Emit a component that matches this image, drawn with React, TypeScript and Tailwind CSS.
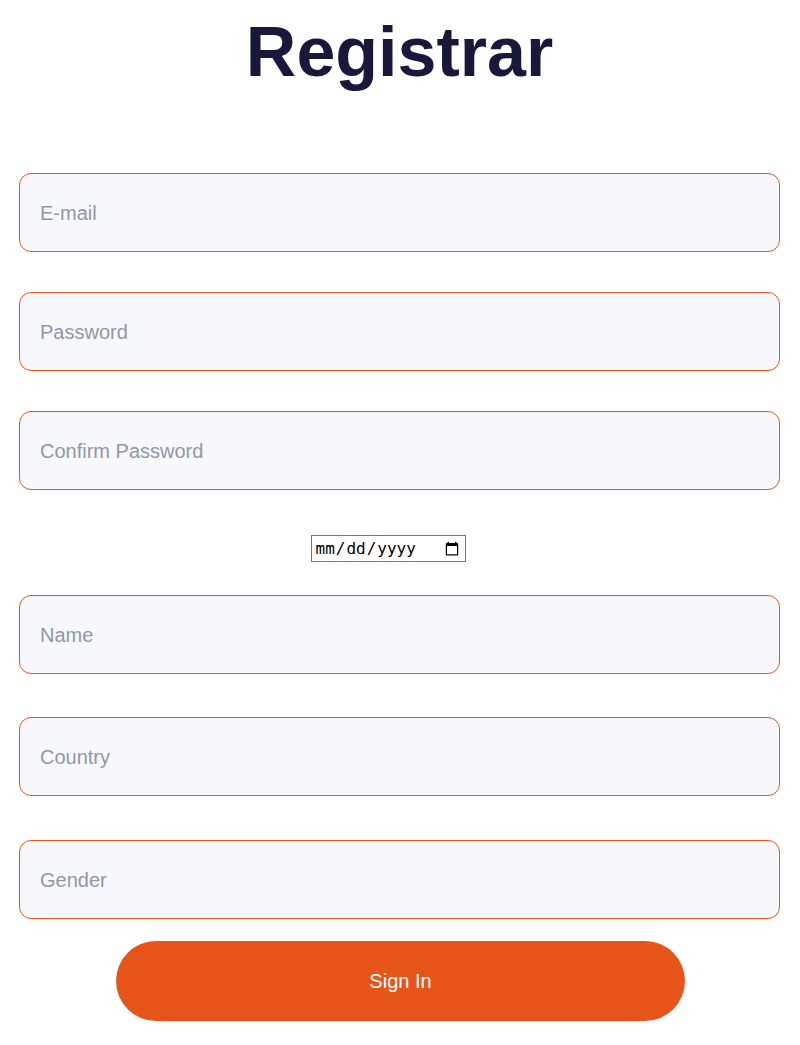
export default function App() {
  const field =
    "block w-full h-[79px] rounded-[12px] border border-[#e8561c] bg-[#f7f8fc] px-5 pt-[2px] text-[20px] text-[#1a1a3a] placeholder:text-[#8f98a6] outline-none";

  return (
    <div
      className="min-h-screen bg-white pl-[19px] pr-[20px]"
      style={{ fontFamily: '"Liberation Sans", Arial, sans-serif' }}
    >
      <h1 className="pt-[12px] text-center text-[70px] font-bold leading-[80px] text-[#18183a]">
        Registrar
      </h1>
      <form className="mt-[81px] flex flex-col items-center">
        <input className={field} type="email" placeholder="E-mail" />
        <input className={`${field} mt-[40px]`} type="password" placeholder="Password" />
        <input className={`${field} mt-[40px]`} type="password" placeholder="Confirm Password" />
        <input
          className="mt-[45px] mr-[23px] h-[27px] w-[155px] border border-[#767676] px-[3px] text-[16px] text-black"
          style={{ fontFamily: '"DejaVu Sans Mono", monospace' }}
          type="date"
        />
        <input className={`${field} mt-[33px]`} type="text" placeholder="Name" />
        <input className={`${field} mt-[43px]`} type="text" placeholder="Country" />
        <input className={`${field} mt-[44px]`} type="text" placeholder="Gender" />
        <button
          type="button"
          className="mt-[22px] ml-[2px] h-[80px] w-[569px] rounded-full bg-[#e6541a] text-[20px] text-white"
        >
          Sign In
        </button>
      </form>
    </div>
  );
}
